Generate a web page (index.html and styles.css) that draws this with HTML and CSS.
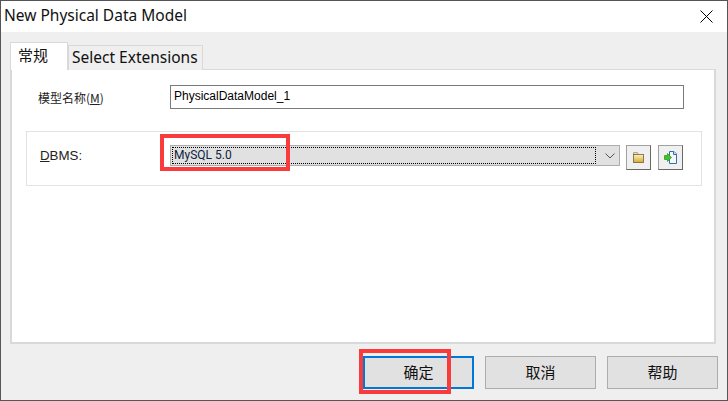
FILE: index.html
```html
<!DOCTYPE html>
<html lang="zh-CN">
<head>
  <meta charset="UTF-8">
  <title>New Physical Data Model</title>
  <link rel="stylesheet" href="styles.css">
</head>
<body>
  <div class="dialog">
    <div class="titlebar">
      <span class="title">New Physical Data Model</span>
      <svg class="close" width="13" height="13" viewBox="0 0 13 13"><path d="M0.5 0.5L12.5 12.5M12.5 0.5L0.5 12.5" stroke="#000" stroke-width="1" fill="none"/></svg>
    </div>
    <div class="content">
      <div class="tabs">
        <div class="tab active">常规</div>
        <div class="tab">Select Extensions</div>
      </div>
      <div class="panel">
        <div class="name-row">
          <label class="name-label">模型名称(<u>M</u>)</label>
          <div class="text-input">PhysicalDataModel_1</div>
        </div>
        <div class="group">
          <label class="dbms-label"><u>D</u>BMS:</label>
          <div class="select">
            <div class="select-value"><span>MySQL 5.0</span></div>
            <svg class="chevron" width="10" height="6" viewBox="0 0 10 6"><path d="M0.5 0.5L5 5L9.5 0.5" stroke="#555" stroke-width="1" fill="none"/></svg>
          </div>
          <button class="icon-btn">
            <svg width="11" height="11" viewBox="0 0 11 11">
              <defs><linearGradient id="folder" x1="0" y1="0" x2="0" y2="1"><stop offset="0" stop-color="#fdf3c4"/><stop offset="1" stop-color="#dba82a"/></linearGradient></defs>
              <path d="M0.5 2.5V0.5H4.5L5.5 2.5z" fill="#e6dcb4" stroke="#a89a70" stroke-width="0.8"/>
              <rect x="0.5" y="2.5" width="10" height="8" fill="url(#folder)" stroke="#6e6040" stroke-width="0.8"/>
            </svg>
          </button>
          <button class="icon-btn">
            <svg width="13" height="13" viewBox="0 0 13 13">
              <path d="M5.5 0.5h4.500l2.500 2.500v9.500h-7z" fill="#f4f8fd" stroke="#3b6ea8" stroke-width="1"/>
              <path d="M9.500 0.500v3h3" fill="#cfe0f2" stroke="#3b6ea8" stroke-width="1"/>
              <path d="M0.500 4.500h3V2.500l4 4-4 4V8.500h-3z" fill="#43c02c" stroke="#2f9f1f" stroke-width="0.8"/>
            </svg>
          </button>
        </div>
      </div>
      <div class="actions">
        <button class="action default">确定</button>
        <button class="action">取消</button>
        <button class="action">帮助</button>
      </div>
    </div>
    <div class="mark mark-select"></div>
    <div class="mark mark-ok"></div>
  </div>
</body>
</html>
```

FILE: styles.css
```css
* {
  box-sizing: border-box;
}

html, body {
  height: 100%;
}

body {
  margin: 0;
  background-color: #fff;
  font-family: "Liberation Sans", "Noto Sans CJK SC", sans-serif;
  color: #000;
}

.dialog {
  position: relative;
  display: flex;
  flex-direction: column;
  width: 728px;
  height: 401px;
  border: 1px solid #555;
  overflow: hidden;
}

.titlebar {
  display: flex;
  align-items: center;
  justify-content: space-between;
  height: 31px;
  padding: 0 14px 0 3px;
  background-color: #fff;
  flex-shrink: 0;
}

.title {
  font-family: "Noto Sans", sans-serif;
  font-size: 15.5px;
  line-height: 29px;
  height: 31px;
  color: #111;
}

.content {
  flex: 1;
  display: flex;
  flex-direction: column;
  padding: 10px 10px 0 9px;
  background-color: #efefef;
}

.tabs {
  display: flex;
  align-items: flex-end;
  height: 28px;
  margin-bottom: -1px;
  position: relative;
  z-index: 1;
}

.tab {
  height: 25px;
  padding: 0 4px 0 3px;
  border: 1px solid #d9d9d9;
  border-bottom: none;
  font-family: "Noto Sans", "Noto Sans CJK SC", sans-serif;
  font-size: 15.5px;
  line-height: 23px;
  background-color: #efefef;
  color: #111;
  white-space: nowrap;
}

.tab.active {
  width: 58px;
  height: 28px;
  padding: 0 7px;
  background-color: #fff;
  font-family: "Noto Sans CJK SC", sans-serif;
  font-size: 15px;
  line-height: 24px;
}

.panel {
  width: 706px;
  height: 275px;
  padding: 15px 15px 0 15px;
  background-color: #fff;
  border: 1px solid #d9d9d9;
  border-width: 1px 2px 2px 2px;
}

.name-row {
  display: flex;
  align-items: center;
  height: 24px;
}

.name-label {
  width: 143px;
  padding-left: 11px;
  font-family: "Noto Sans CJK SC", sans-serif;
  font-size: 12px;
  color: #222;
}

.text-input {
  width: 514px;
  height: 24px;
  padding: 1px 3px;
  border: 1px solid #7a7a7a;
  font-size: 12px;
  line-height: 18px;
}

.group {
  display: flex;
  align-items: flex-start;
  width: 676px;
  height: 55px;
  margin-top: 22px;
  margin-left: -1px;
  padding-top: 13px;
  border: 1px solid #e3e3e3;
  background-color: #fff;
}

.dbms-label {
  width: 143px;
  padding-left: 13px;
  padding-top: 3px;
  font-size: 13.3px;
  color: #222;
}

.select {
  display: flex;
  align-items: center;
  width: 450px;
  height: 21px;
  padding: 1px;
  background-color: #e1e1e1;
  border: 1px solid #adadad;
}

.select-value {
  width: 424px;
  height: 100%;
  border: 1px dotted #000;
  font-family: Roboto, sans-serif;
  font-size: 12px;
  line-height: 15px;
  padding-left: 1px;
}

.select-value span {
  color: #0d2440;
}

.chevron {
  margin-left: 9px;
}

.icon-btn {
  display: flex;
  align-items: center;
  justify-content: center;
  width: 25px;
  height: 25px;
  margin-left: 6px;
  padding: 0;
  background-color: #f0f0f0;
  border: 1px solid #a0a0a0;
  border-right-color: #696969;
  border-bottom-color: #696969;
}

.icon-btn + .icon-btn {
  margin-left: 7px;
}

.actions {
  display: flex;
  justify-content: flex-end;
  gap: 11px;
  width: 708px;
  padding-top: 12px;
}

.action {
  width: 111px;
  height: 33px;
  padding: 0 0 2px;
  background-color: #e1e1e1;
  border: 1px solid #adadad;
  font-family: "Noto Sans CJK SC", sans-serif;
  font-size: 15px;
  color: #111;
}

.action.default {
  border: 2px solid #0078d7;
}

.mark {
  position: absolute;
  border: 4px solid #f93b3b;
  pointer-events: none;
}

.mark-select {
  left: 159px;
  top: 133px;
  width: 130px;
  height: 37px;
}

.mark-ok {
  left: 358px;
  top: 348px;
  width: 92px;
  height: 45px;
}
```
